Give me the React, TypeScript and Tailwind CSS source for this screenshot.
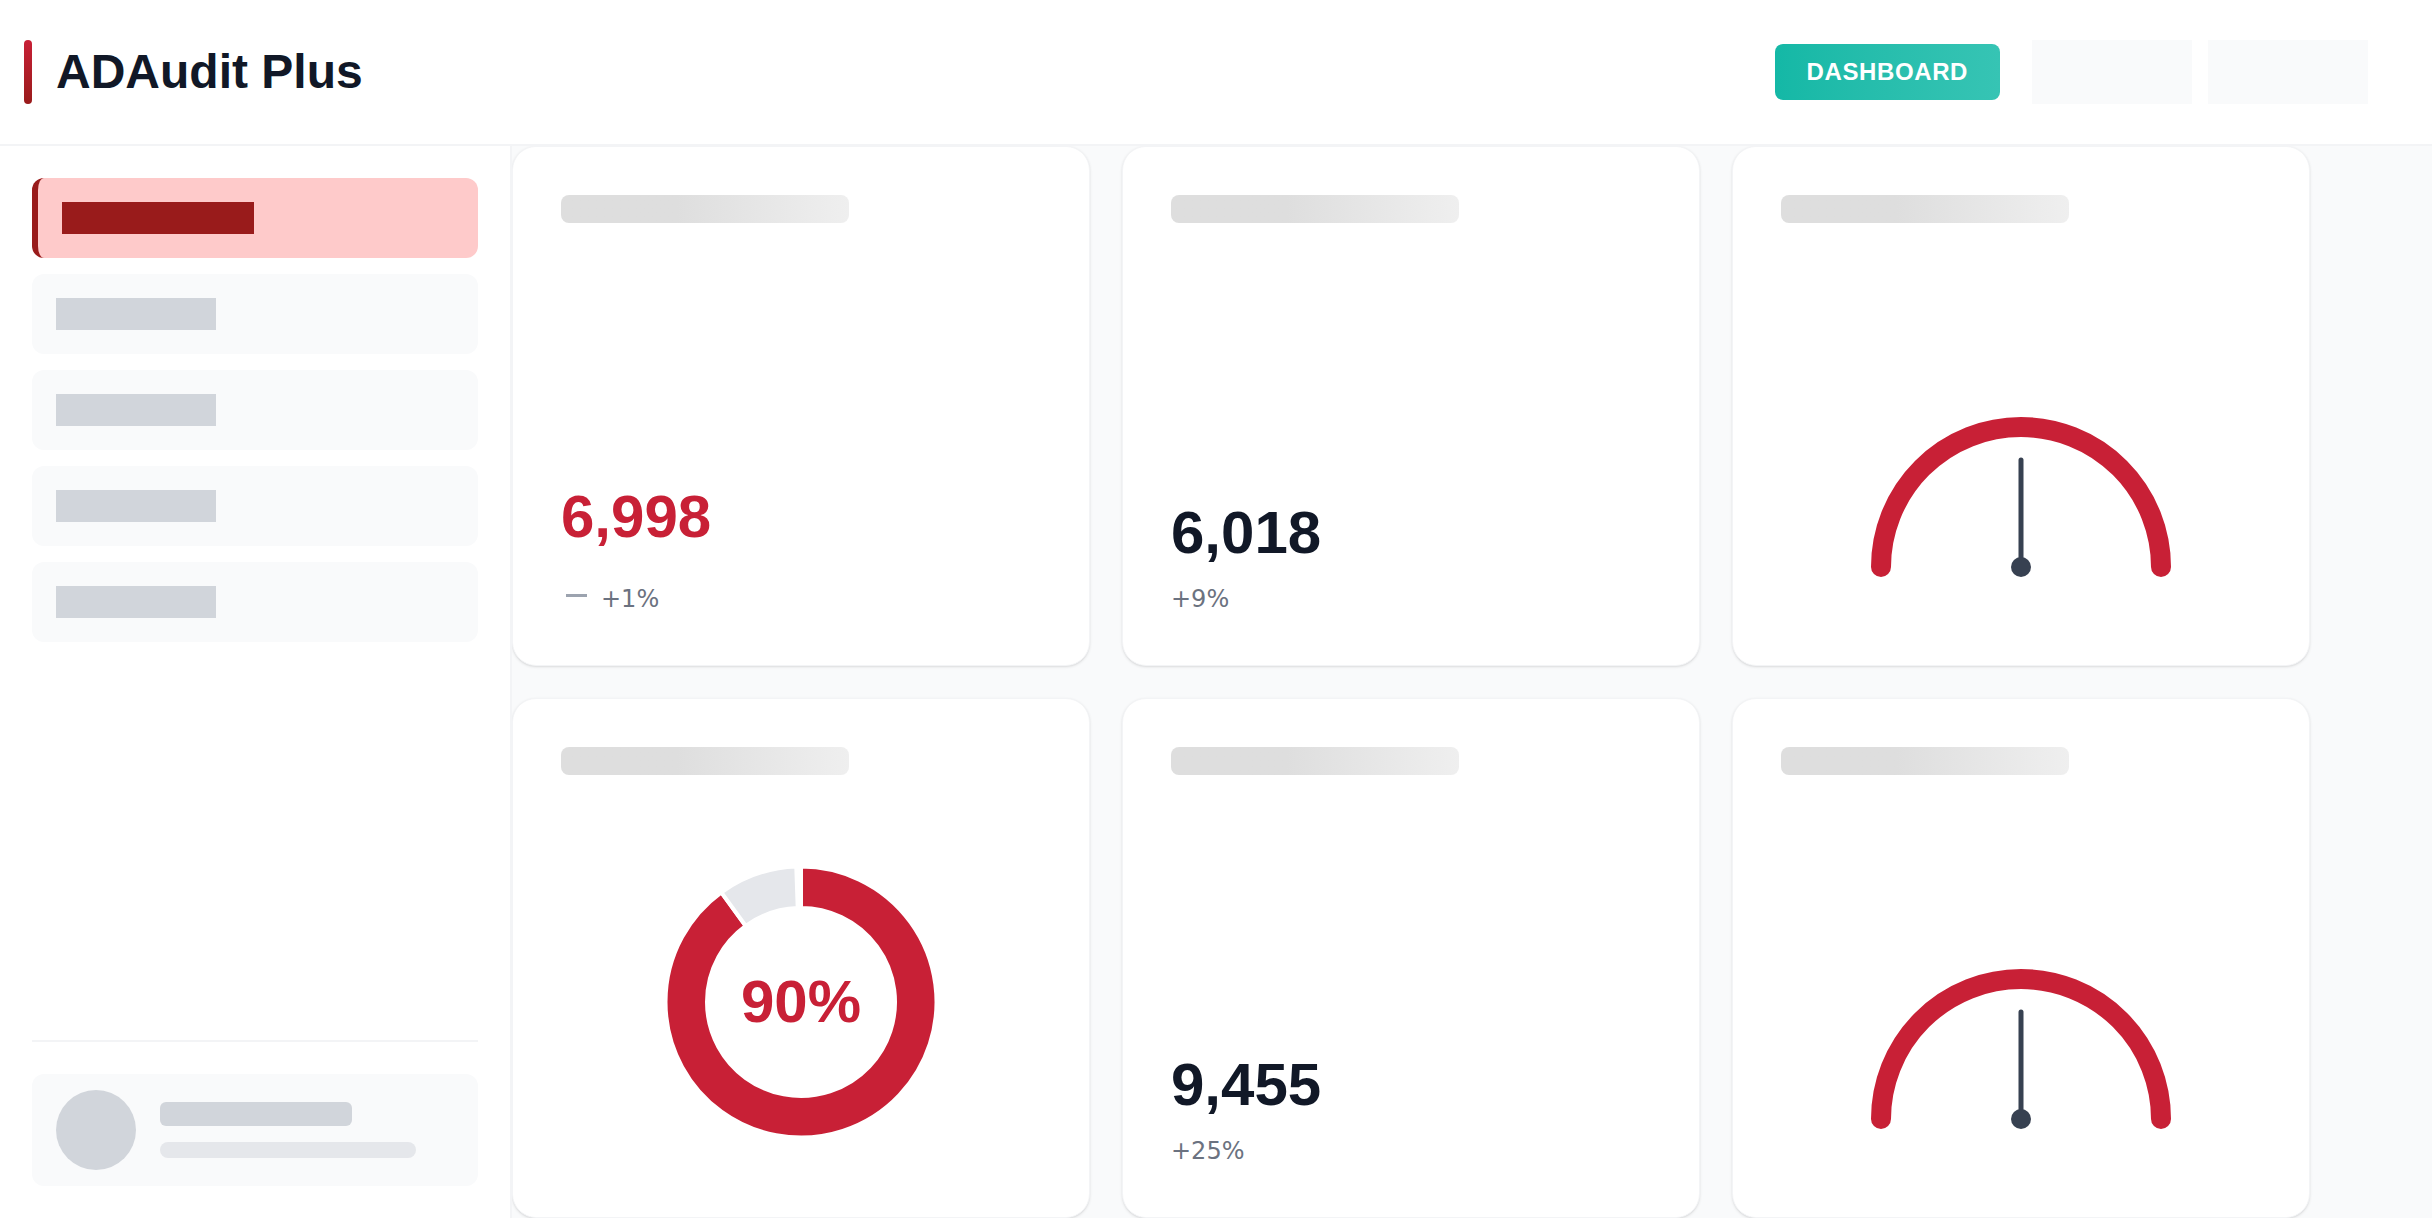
import React from "react";

const RED = "#c82036";

const polar = (cx: number, cy: number, r: number, deg: number) => {
  const a = (deg * Math.PI) / 180;
  return [cx + r * Math.sin(a), cy - r * Math.cos(a)];
};

// annular sector, angles clockwise from 12 o'clock
const sector = (cx: number, cy: number, ro: number, ri: number, from: number, to: number) => {
  const large = to - from > 180 ? 1 : 0;
  const [x1, y1] = polar(cx, cy, ro, from);
  const [x2, y2] = polar(cx, cy, ro, to);
  const [x3, y3] = polar(cx, cy, ri, to);
  const [x4, y4] = polar(cx, cy, ri, from);
  return `M${x1} ${y1} A${ro} ${ro} 0 ${large} 1 ${x2} ${y2} L${x3} ${y3} A${ri} ${ri} 0 ${large} 0 ${x4} ${y4} Z`;
};

const CardTitle = () => (
  <div className="h-7 w-[60%] rounded-lg bg-gradient-to-r from-[#dedede] from-40% to-[#efefef]" />
);

const Card = ({ children }: { children: React.ReactNode }) => (
  <div className="h-[520px] flex flex-col justify-between p-12 rounded-3xl bg-white border border-gray-100 shadow-sm">
    {children}
  </div>
);

interface StatCardProps {
  value: string;
  change: string;
  highlight?: boolean;
}

const StatCard = ({ value, change, highlight }: StatCardProps) => (
  <Card>
    <CardTitle />
    <div>
      <p
        className={
          highlight
            ? "text-6xl font-bold leading-none text-[#c82036]"
            : "text-6xl font-bold leading-none text-[#111827]"
        }
      >
        {value}
      </p>
      <div className={highlight ? "mt-[34px] flex items-center h-9 gap-[14px]" : "mt-[18px] flex items-center h-9"}>
        {highlight && <span className="ml-[5px] mb-2 w-[21px] h-[3px] bg-[#9ca3af]" />}
        <span className="font-['DejaVu_Sans',sans-serif] text-2xl leading-9 text-[#6b7280]">{change}</span>
      </div>
    </div>
  </Card>
);

const DonutCard = ({ percent }: { percent: number }) => {
  const cut = (percent / 100) * 360;
  return (
    <Card>
      <CardTitle />
      <div className="relative w-[270px] h-[270px] mx-auto mb-8">
        <svg width="270" height="270" viewBox="0 0 270 270">
          <path d={sector(135, 135, 135.5, 94, 0, cut)} fill={RED} stroke="#fff" strokeWidth="4" />
          <path d={sector(135, 135, 135.5, 94, cut, 358)} fill="#e5e7eb" stroke="#fff" strokeWidth="4" />
        </svg>
        <div className="absolute inset-0 flex items-center justify-center">
          <span className="text-6xl font-bold leading-none text-[#c82036]">{percent}%</span>
        </div>
      </div>
    </Card>
  );
};

const GaugeCard = () => (
  <Card>
    <CardTitle />
    <svg className="mx-auto mb-[30px]" width="320" height="180" viewBox="0 0 320 180">
      <path d="M20 160 A140 140 0 0 1 300 160" fill="none" stroke={RED} strokeWidth="20" strokeLinecap="round" />
      <line x1="160" y1="160" x2="160" y2="53" stroke="#374151" strokeWidth="5" strokeLinecap="round" />
      <circle cx="160" cy="160" r="10" fill="#374151" />
    </svg>
  </Card>
);

const NavItem = ({ active }: { active?: boolean }) =>
  active ? (
    <div className="h-20 flex items-center px-6 rounded-xl bg-[#fecaca] border-l-[6px] border-[#991b1b]">
      <div className="w-48 h-8 bg-[#991b1b]" />
    </div>
  ) : (
    <div className="h-20 flex items-center px-6 rounded-xl bg-[#f9fafb]">
      <div className="w-40 h-8 bg-[#d1d5db]" />
    </div>
  );

const App = () => {
  return (
    <div className="h-screen flex flex-col overflow-hidden bg-white font-['Liberation_Sans',Arial,sans-serif]">
      <header className="h-[146px] shrink-0 flex items-center justify-between pl-6 pr-16 border-b-2 border-[#f3f4f6] bg-white">
        <div className="flex items-center gap-6">
          <div className="w-2 h-16 rounded-full bg-gradient-to-b from-[#c82036] to-[#991b1b]" />
          <h1 className="text-5xl font-bold leading-none text-[#111827]">ADAudit Plus</h1>
        </div>
        <div className="flex items-center gap-8">
          <button
            type="button"
            className="px-8 py-3 rounded-lg bg-gradient-to-r from-[#14b8a6] to-[#36c4b4] text-2xl font-bold tracking-wide text-white"
          >
            DASHBOARD
          </button>
          <div className="flex gap-4">
            <div className="w-40 h-16 bg-[#f9fafb]" />
            <div className="w-40 h-16 bg-[#f9fafb]" />
          </div>
        </div>
      </header>

      <div className="flex flex-1 min-h-0">
        <aside className="w-[512px] shrink-0 flex flex-col px-8 pt-8 pb-8 border-r-2 border-[#f3f4f6] bg-white">
          <nav className="flex flex-col gap-4">
            <NavItem active />
            <NavItem />
            <NavItem />
            <NavItem />
            <NavItem />
          </nav>
          <div className="mt-auto pt-8 border-t-2 border-[#f3f4f6]">
            <div className="h-28 flex items-center gap-6 px-6 rounded-xl bg-[#f9fafb]">
              <div className="w-20 h-20 rounded-full bg-[#d1d5db]" />
              <div className="flex flex-col gap-4">
                <div className="w-48 h-6 rounded-md bg-[#d1d5db]" />
                <div className="w-64 h-4 rounded-full bg-[#e5e7eb]" />
              </div>
            </div>
          </div>
        </aside>

        <main className="flex-1 overflow-hidden bg-[#f9fafb]">
          <div className="grid grid-cols-[repeat(3,578px)] gap-8">
            <StatCard value="6,998" change="+1%" highlight />
            <StatCard value="6,018" change="+9%" />
            <GaugeCard />
            <DonutCard percent={90} />
            <StatCard value="9,455" change="+25%" />
            <GaugeCard />
          </div>
        </main>
      </div>
    </div>
  );
};

export default App;
